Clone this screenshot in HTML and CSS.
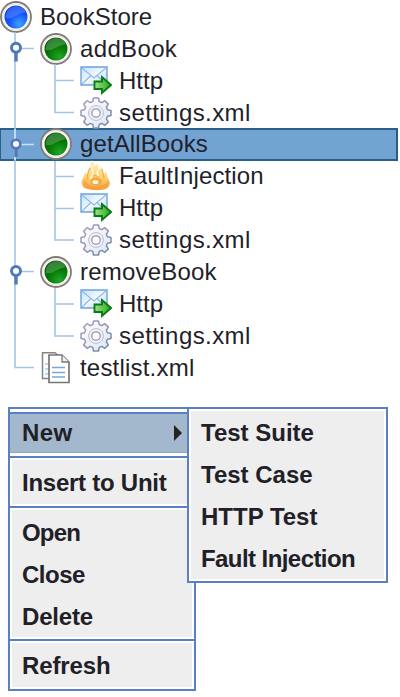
FILE: index.html
```html
<!DOCTYPE html>
<html lang="en">
<head>
<meta charset="utf-8">
<title>BookStore</title>
<link rel="stylesheet" href="styles.css">
</head>
<body>
<svg width="0" height="0" class="defs">
  <defs>
    <radialGradient id="blue" cx=".65" cy=".8" r=".8"><stop offset="0" stop-color="#3ba4ff"/><stop offset=".55" stop-color="#1755ff"/><stop offset="1" stop-color="#0b36df"/></radialGradient>
    <radialGradient id="green" cx=".65" cy=".85" r=".8"><stop offset="0" stop-color="#23a52a"/><stop offset=".5" stop-color="#078007"/><stop offset="1" stop-color="#075407"/></radialGradient>
    <linearGradient id="mail" x1="0" y1="0" x2="1" y2="1"><stop offset="0" stop-color="#c4e0fb"/><stop offset=".5" stop-color="#f1f8ff"/><stop offset="1" stop-color="#b9d9f8"/></linearGradient>
    <linearGradient id="arrow" x1="0" y1="0" x2="1" y2="0"><stop offset="0" stop-color="#9be58d"/><stop offset="1" stop-color="#25a51d"/></linearGradient>
    <linearGradient id="gear" x1="0" y1="0" x2="1" y2="1"><stop offset="0" stop-color="#fff"/><stop offset=".5" stop-color="#f1f0fa"/><stop offset="1" stop-color="#cfe9fa"/></linearGradient>
    <linearGradient id="gearline" x1="0" y1="0" x2="1" y2="1"><stop offset="0" stop-color="#aaa3c2"/><stop offset="1" stop-color="#73879b"/></linearGradient>
    <linearGradient id="fire" x1="0" y1="0" x2="0" y2="1"><stop offset="0" stop-color="#fff0cf"/><stop offset=".5" stop-color="#ffd777"/><stop offset="1" stop-color="#f5a347"/></linearGradient>
  </defs>
  <symbol id="i-blue" viewBox="0 0 32 32"><circle cx="16" cy="16" r="15" fill="#fff" stroke="#827c76" stroke-width="1.8"/><circle cx="16" cy="16" r="13.4" fill="none" stroke="#e5e2df" stroke-width="1"/><circle cx="16" cy="16" r="11.5" fill="url(#blue)"/><path d="M5.5 17Q6 8 13 5.5Q22 3 26 11Q20 12 16 14.5Q11 18 5.5 17Z" fill="#70a3ff" opacity=".4"/></symbol>
  <symbol id="i-green" viewBox="0 0 32 32"><circle cx="16" cy="16" r="15" fill="#fff" stroke="#827c76" stroke-width="1.8"/><circle cx="16" cy="16" r="13.4" fill="none" stroke="#e5e2df" stroke-width="1"/><circle cx="16" cy="16" r="11.5" fill="url(#green)"/><path d="M5.5 17Q6 8 13 5.5Q22 3 26 11Q20 12 16 14.5Q11 18 5.5 17Z" fill="#70b970" opacity=".45"/></symbol>
  <symbol id="i-mail" viewBox="0 0 32 32"><path d="M1 2H27V20H1Z" fill="url(#mail)" stroke="#6ea3d9" stroke-width="1.4"/><path d="M2 3L14 13L26 3M2 19L11 10.5M26 19L17 10.5" fill="none" stroke="#8ebae5" stroke-width="1.2"/><path d="M14.5 16.500H22V12L31 20L22 28V24H14.500Z" fill="url(#arrow)" stroke="#087d0d" stroke-width="1.9"/></symbol>
  <symbol id="i-gear" viewBox="0 0 32 32"><path d="M13.5 1H18.5L19.2 4.500L21.800 5.600L24.900 3.700L28.300 7.100L26.400 10.200L27.500 12.800L31 13.500V18.500L27.500 19.200L26.400 21.800L28.300 24.900L24.900 28.300L21.800 26.400L19.200 27.500L18.500 31H13.500L12.800 27.500L10.200 26.400L7.100 28.300L3.700 24.900L5.600 21.800L4.500 19.200L1 18.500V13.500L4.500 12.800L5.600 10.200L3.700 7.100L7.100 3.700L10.200 5.600L12.800 4.500Z" fill="url(#gear)" stroke="url(#gearline)" stroke-width="1.500" stroke-linejoin="round"/><circle cx="16" cy="16" r="7.500" fill="#eeeef5" stroke="#c0c2cf"/><circle cx="16" cy="16" r="4.200" fill="#fff" stroke="#969caf" stroke-width="1.300"/></symbol>
  <symbol id="i-fire" viewBox="0 0 32 32"><path d="M4 28Q-1 23 4 16L5 12L8 16Q7 10 10 7L12 0L15 6L18 3L18 10L22 7Q21 12 24 15L26 11Q27 17 29 20Q32 25 26 29Q15 32 4 28Z" fill="url(#fire)"/><path d="M4 20Q3 27 8 28Q15 31 25 28Q30 26 28 20Q26 25 22 25Q15 29 8 24Z" fill="#f39c3b" opacity=".7"/><path d="M10 8Q6 15 8 20M22 9L24 18M11 17Q15 14 19 17" fill="none" stroke="#f5b04f" stroke-width="1.300"/><path d="M12 5L13 14L10 19M17 11L18 16" fill="none" stroke="#fff5cf" stroke-width="1.800"/><ellipse cx="16" cy="21.500" rx="5.500" ry="4" fill="#f4a640"/><ellipse cx="15.500" cy="22" rx="3" ry="2" fill="#fff6d7"/></symbol>
  <symbol id="i-docs" viewBox="0 0 32 32"><path d="M2.500 .8H15L20 5V26.500H2.500Z" fill="#fff" stroke="#858585" stroke-width="1.500"/><path d="M5 12H10M5 17H10M5 22H10" stroke="#80afe0" stroke-width="1.200"/><path d="M9 3H22L29 10V30.500H9Z" fill="#fff" stroke="#777" stroke-width="1.700"/><path d="M22 3V10H29" fill="#eee" stroke="#777" stroke-width="1.300"/><path d="M12 15.500H25M12 20.500H25M12 25H25" stroke="#75a8dc" stroke-width="1.300"/></symbol>
</svg>

<main class="tree">
  <div class="row root"><svg class="icon"><use href="#i-blue"/></svg><span>BookStore</span></div>
  <div class="row suite"><svg class="icon"><use href="#i-green"/></svg><span class="w-add">addBook</span></div>
  <div class="row leaf"><svg class="icon"><use href="#i-mail"/></svg><span>Http</span></div>
  <div class="row leaf"><svg class="icon"><use href="#i-gear"/></svg><span class="w-set">settings.xml</span></div>
  <div class="row suite selected"><svg class="icon"><use href="#i-green"/></svg><span class="w-get">getAllBooks</span></div>
  <div class="row leaf"><svg class="icon"><use href="#i-fire"/></svg><span class="w-fault">FaultInjection</span></div>
  <div class="row leaf"><svg class="icon"><use href="#i-mail"/></svg><span>Http</span></div>
  <div class="row leaf"><svg class="icon"><use href="#i-gear"/></svg><span class="w-set">settings.xml</span></div>
  <div class="row suite"><svg class="icon"><use href="#i-green"/></svg><span class="w-rem">removeBook</span></div>
  <div class="row leaf"><svg class="icon"><use href="#i-mail"/></svg><span>Http</span></div>
  <div class="row leaf"><svg class="icon"><use href="#i-gear"/></svg><span class="w-set">settings.xml</span></div>
  <div class="row suite"><svg class="icon"><use href="#i-docs"/></svg><span class="w-test">testlist.xml</span></div>
  <svg class="lines" width="80" height="390" viewBox="0 0 80 390">
    <g fill="none" stroke="#a4c5e4" stroke-width="1.600">
      <path d="M15 32V367.500H34"/>
      <path d="M20 48.500H34M20 271.500H34"/>
      <path d="M55 64V112.500H74M55 80.500H74"/>
      <path d="M55 161V240H74M55 176.500H74M55 208.500H74"/>
      <path d="M55 288V336H74M55 304H74"/>
    </g>
    <path d="M15 129V160M20 144.500H34" stroke="#c9e2fa" stroke-width="1.600"/>
    <g stroke="#5078ba" fill="#fff">
      <path d="M16 53V61.500M16 149V157M16 276V284.500" stroke-width="3.400"/>
      <circle cx="16" cy="47.700" r="4.500" stroke-width="3"/>
      <circle cx="16" cy="144" r="4.300" stroke-width="2.600"/>
      <circle cx="16" cy="271" r="4.500" stroke-width="3"/>
    </g>
  </svg>
</main>

<nav class="menu">
  <div class="item new"><span class="w-new">New</span><svg width="10" height="18"><path d="M1 1L9 9L1 17Z" fill="#222"/></svg></div>
  <div class="group"><div class="item"><span class="w-insert">Insert to Unit</span></div></div>
  <div class="group long"><div class="item"><span class="w-open">Open</span></div><div class="item"><span class="w-close">Close</span></div><div class="item"><span class="w-delete">Delete</span></div></div>
  <div class="group"><div class="item"><span class="w-refresh">Refresh</span></div></div>
  <div class="submenu">
    <div class="item"><span>Test Suite</span></div>
    <div class="item"><span>Test Case</span></div>
    <div class="item"><span>HTTP Test</span></div>
    <div class="item"><span class="w-fi">Fault Injection</span></div>
  </div>
</nav>
</body>
</html>
```
FILE: styles.css
```css
* { box-sizing: border-box; }
body {
  margin: 0;
  height: 697px;
  background: #fff;
  color: #221f2b;
  font: 24px/32px "Liberation Sans", Arial, sans-serif;
  overflow: hidden;
}
.defs { position: absolute; }
.tree { position: relative; height: 407px; padding-top: 1px; }
.row { display: flex; align-items: center; height: 31.9px; white-space: nowrap; }
.icon { width: 32px; height: 32px; flex: none; margin-right: 8px; }
.suite { padding-left: 40px; }
.leaf { padding-left: 80px; }
.leaf .icon { margin-right: 7px; }
.selected {
  width: 398px;
  height: 33px;
  margin: -.6px 0 -.5px;
  background: #73a3d2;
  border: 2px solid #286087;
  border-left-width: 1px;
  padding-left: 39px;
}
.lines { position: absolute; left: 0; top: 0; }

.menu {
  position: relative;
  width: 188px;
  height: 284px;
  margin: 0 0 0 8px;
  background: #eee;
  border: 2px solid #5b7fc5;
  font-weight: bold;
  color: #222027;
}
.item { display: flex; align-items: center; height: 42px; padding-left: 12px; white-space: nowrap; }
.new {
  height: 41px;
  margin-top: 3px;
  justify-content: space-between;
  padding-right: 11px;
  border-top: 2px solid #5b7fc5;
  border-bottom: 1px solid #8fa7bf;
  background: #a3b8cc;
  box-shadow: 0 -3px #fff, 0 3px #fff;
}
.group {
  height: 50px;
  border-top: 2px solid #5b7fc5;
  padding-top: 4px;
  box-shadow: inset 2px 2px #fff, inset -2px -2px #fff;
}
.long { height: 133px; }
.new + .group { margin-top: 3px; }
.submenu {
  position: absolute;
  left: 177px;
  top: -2px;
  width: 201px;
  height: 176px;
  padding-top: 3px;
  background: #eee;
  border: 2px solid #5b7fc5;
  box-shadow: inset 2px 2px #fff, inset -2px -2px #fff;
}
.w-add { letter-spacing: .35px; }
.w-get { letter-spacing: .1px; }
.w-rem { letter-spacing: .2px; }
.w-set { letter-spacing: .42px; }
.w-test { letter-spacing: .2px; }
.w-fault { letter-spacing: .15px; }
.w-new { letter-spacing: .4px; }
.w-insert { letter-spacing: -.25px; }
.w-open { letter-spacing: -.8px; }
.w-close { letter-spacing: -.5px; }
.w-delete { letter-spacing: -.2px; }
.w-refresh { letter-spacing: -.1px; }
.w-fi { letter-spacing: -.57px; }
```
